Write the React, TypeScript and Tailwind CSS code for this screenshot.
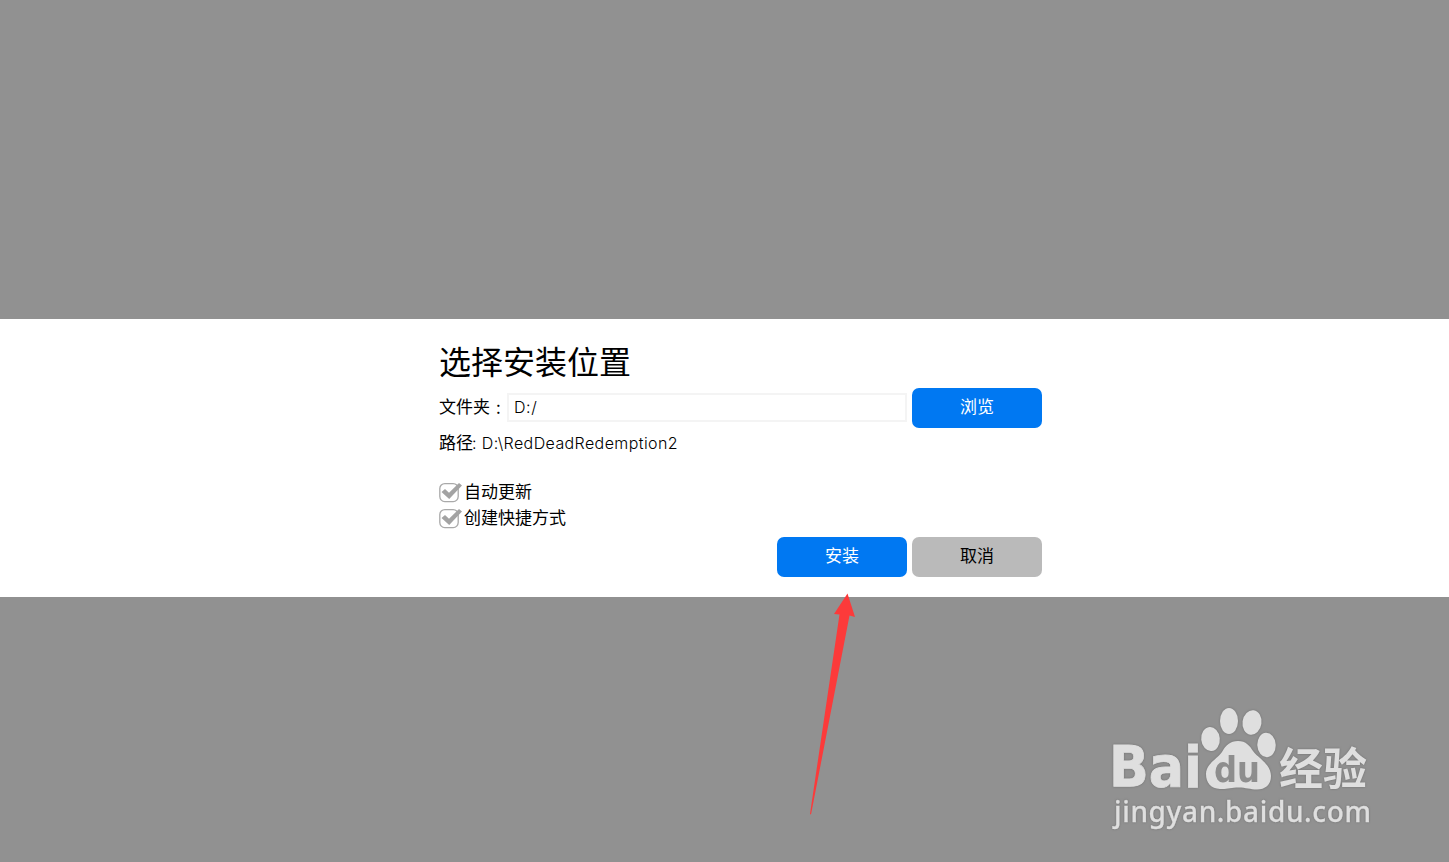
import { useState, type ReactNode } from "react";

type CheckRowProps = {
  checked: boolean;
  onChange: (checked: boolean) => void;
  children: ReactNode;
};

function CheckRow({ checked, onChange, children }: CheckRowProps) {
  return (
    <label className="flex h-[26px] cursor-pointer items-center gap-[2px]">
      <input
        type="checkbox"
        className="sr-only"
        checked={checked}
        onChange={(e) => onChange(e.target.checked)}
      />
      <svg width="23" height="22" viewBox="0 0 23 22" fill="none" className="shrink-0">
        <rect x="0.8" y="1.6" width="18.4" height="18" rx="5" stroke="#a9a9a9" strokeWidth="1.3" />
        {checked && <path d="M2.5 10 L6 7 L10 10.8 L20 1 L23 3.6 L10.2 17 Z" fill="#a3a3a3" />}
      </svg>
      <span>{children}</span>
    </label>
  );
}

function Arrow() {
  return (
    <svg
      width="75"
      height="240"
      viewBox="0 0 75 240"
      className="pointer-events-none absolute top-[585px] left-[795px]"
    >
      <path d="M52.5 8.5 L60 32 L54.5 30.5 L16 229.5 L15 229 L44.5 29.5 L39 29 Z" fill="#fc3a3a" />
    </svg>
  );
}

function Watermark() {
  return (
    <svg
      width="290"
      height="145"
      viewBox="0 0 290 145"
      fill="#dfdfdf"
      className="pointer-events-none absolute top-[695px] left-[1100px] drop-shadow-[0_0_1px_#707070]"
    >
      <text
        x="9"
        y="92"
        fontSize="57"
        fontWeight="700"
        stroke="#dfdfdf"
        strokeWidth="0.8"
        textLength="93"
        lengthAdjust="spacingAndGlyphs"
        className="font-['DejaVu_Sans',sans-serif]"
      >
        Bai
      </text>
      <ellipse cx="110.5" cy="44" rx="9.3" ry="12" transform="rotate(-5 110.5 44)" />
      <ellipse cx="129" cy="26" rx="9" ry="13" />
      <ellipse cx="152" cy="27.5" rx="9.5" ry="12.3" transform="rotate(8 152 27.5)" />
      <ellipse cx="166.5" cy="50" rx="9.2" ry="12.2" transform="rotate(-3 166.5 50)" />
      <path d="M138 46 C146 46 150 51 153 56 C158 63 171 69 171 81 C171 90 165 94.5 157 94.5 C150 94.5 146 92.5 138.5 92.5 C131 92.5 127 94.5 120 94 C111 93.5 106 88 106 79 C106 69 117 64 122 57 C126 50 130 46 138 46 Z" />
      <text
        x="114"
        y="87"
        fontSize="36"
        fontWeight="700"
        fill="#8e8e8e"
        textLength="46"
        lengthAdjust="spacingAndGlyphs"
        className="font-['DejaVu_Sans',sans-serif]"
      >
        du
      </text>
      <text
        x="179"
        y="90"
        fontSize="44"
        fontWeight="700"
        textLength="88"
        lengthAdjust="spacingAndGlyphs"
        className="font-['Noto_Sans_CJK_SC',sans-serif]"
      >
        经验
      </text>
      <text
        x="14"
        y="127"
        fontSize="28"
        fontWeight="500"
        stroke="#dfdfdf"
        strokeWidth="0.3"
        textLength="257"
        lengthAdjust="spacing"
        className="font-['Noto_Sans',sans-serif]"
      >
        jingyan.baidu.com
      </text>
    </svg>
  );
}

export default function App() {
  const [folder, setFolder] = useState("D:/");
  const [autoUpdate, setAutoUpdate] = useState(true);
  const [shortcut, setShortcut] = useState(true);

  return (
    <div className="relative flex h-[862px] w-full flex-col overflow-hidden bg-[#919191] pt-[319px] font-[Inter,'Noto_Sans_CJK_SC',sans-serif] text-[17px] text-black">
      <section className="h-[278px] bg-white pl-[439px]">
        <div className="flex w-[603px] flex-col">
          <h1 className="mt-5 h-12 text-[32px] leading-[48px]">选择安装位置</h1>
          <div className="mt-px flex h-10 items-center">
            <label htmlFor="folder" className="flex w-[68px]">
              文件夹
              <span className="ml-[6px] font-['Noto_Sans_CJK_SC',sans-serif] leading-[23px]">:</span>
            </label>
            <input
              id="folder"
              value={folder}
              onChange={(e) => setFolder(e.target.value)}
              className="mb-px h-[29px] w-[400px] border-2 border-[#f4f4f4] px-[5px] pb-0.5 text-base font-light tracking-[0.6px] outline-none"
            />
            <button className="ml-[5px] h-10 w-[130px] rounded-[7px] bg-[#0078f2] text-white">浏览</button>
          </div>
          <p className="mt-[3px] flex h-6 items-center">
            <span className="pt-0.5">路径</span>
            <span className="-ml-px text-base font-light tracking-[0.4px] whitespace-pre">: D:\RedDeadRedemption2</span>
          </p>
          <div className="mt-[25px] h-[52px]">
            <CheckRow checked={autoUpdate} onChange={setAutoUpdate}>
              自动更新
            </CheckRow>
            <CheckRow checked={shortcut} onChange={setShortcut}>
              创建快捷方式
            </CheckRow>
          </div>
          <div className="mt-[5px] flex justify-end gap-[5px]">
            <button className="h-10 w-[130px] rounded-[7px] bg-[#0078f2] text-white">安装</button>
            <button className="h-10 w-[130px] rounded-[7px] bg-[#bababa]">取消</button>
          </div>
        </div>
      </section>
      <Arrow />
      <Watermark />
    </div>
  );
}
